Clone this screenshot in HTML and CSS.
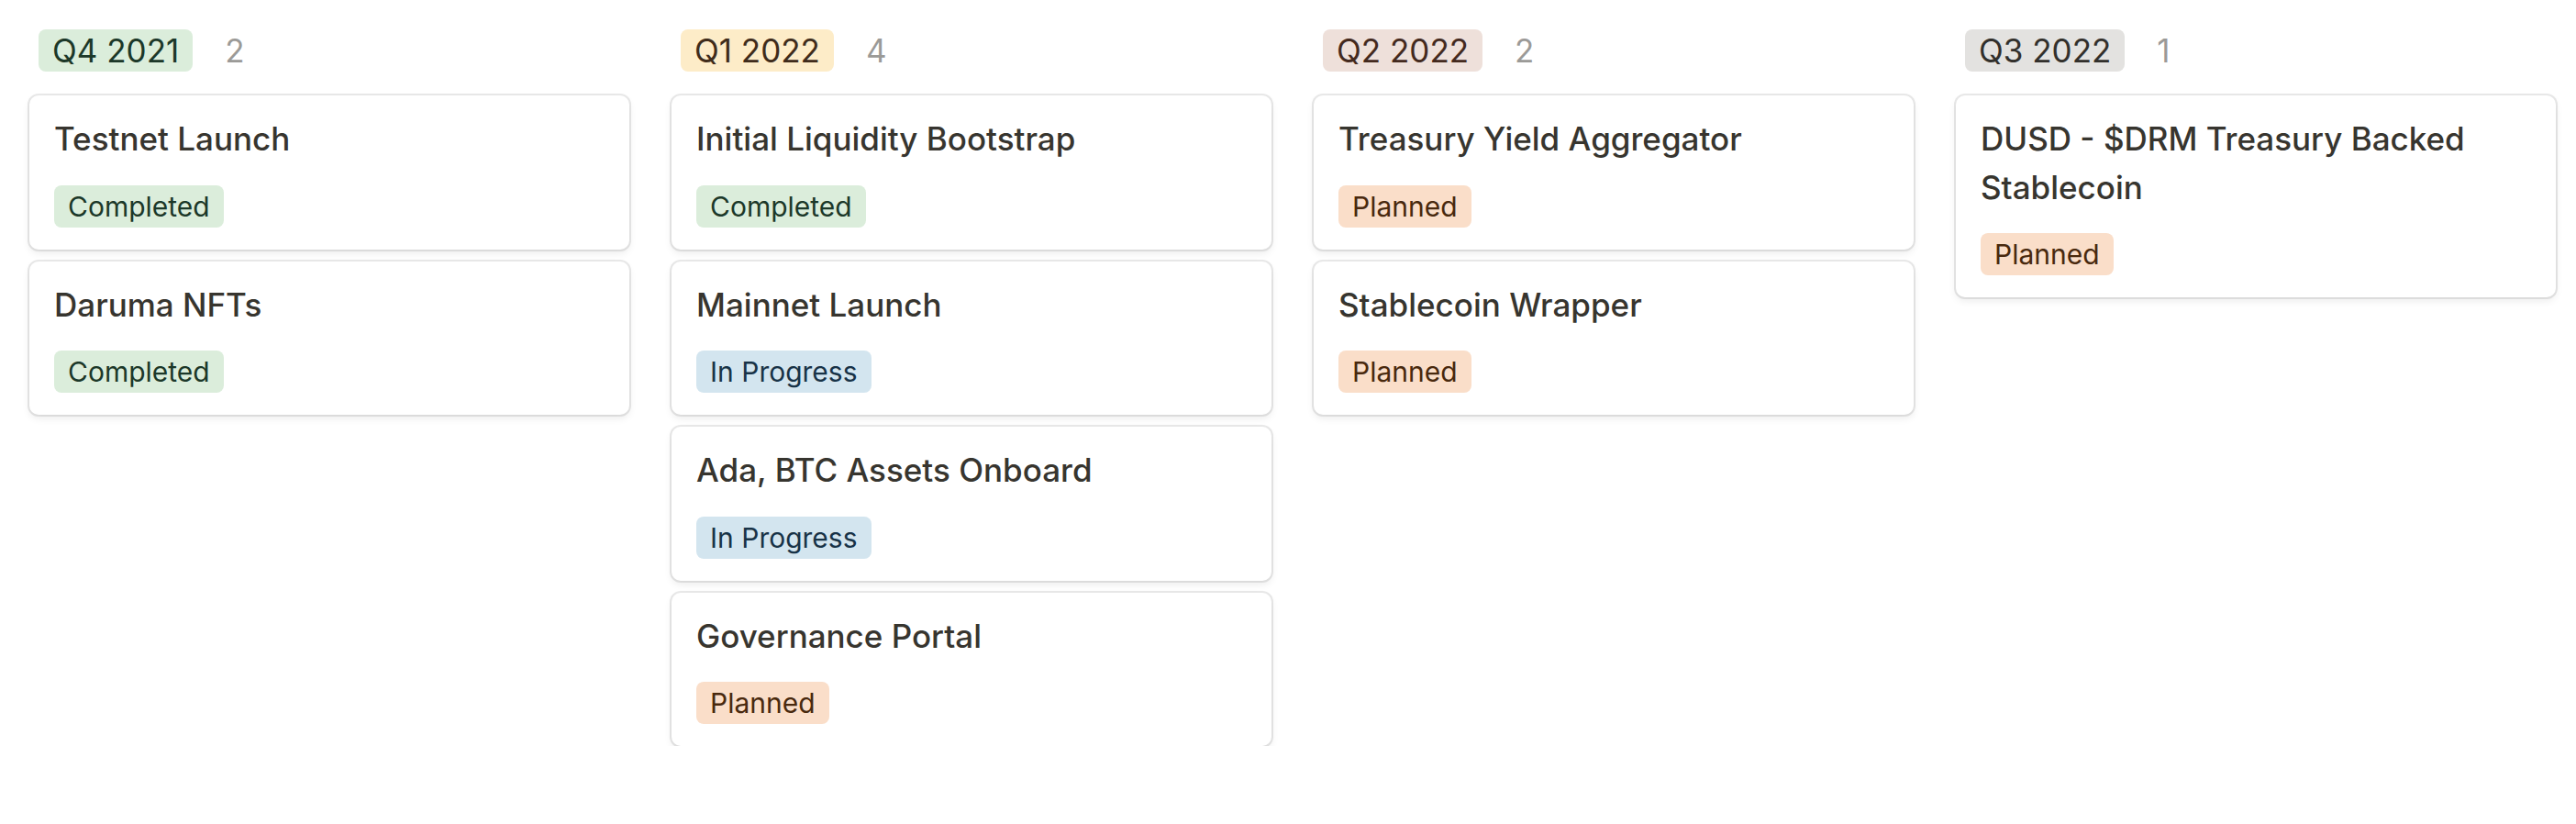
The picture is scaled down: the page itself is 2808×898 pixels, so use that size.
FILE: index.html
```html
<!DOCTYPE html>
<html lang="en">
<head>
<meta charset="utf-8">
<title>Roadmap</title>
<link rel="stylesheet" href="styles.css">
</head>
<body>
<div class="board">
  <section class="column">
    <header class="group-head">
      <span class="group-tag tag-green">Q4 2021</span>
      <span class="count">2</span>
    </header>
    <div class="cards">
      <article class="card">
        <div class="title">Testnet Launch</div>
        <span class="status st-green">Completed</span>
      </article>
      <article class="card">
        <div class="title">Daruma NFTs</div>
        <span class="status st-green">Completed</span>
      </article>
    </div>
  </section>

  <section class="column">
    <header class="group-head">
      <span class="group-tag tag-yellow">Q1 2022</span>
      <span class="count">4</span>
    </header>
    <div class="cards">
      <article class="card">
        <div class="title">Initial Liquidity Bootstrap</div>
        <span class="status st-green">Completed</span>
      </article>
      <article class="card">
        <div class="title">Mainnet Launch</div>
        <span class="status st-blue">In Progress</span>
      </article>
      <article class="card">
        <div class="title">Ada, BTC Assets Onboard</div>
        <span class="status st-blue">In Progress</span>
      </article>
      <article class="card">
        <div class="title">Governance Portal</div>
        <span class="status st-orange">Planned</span>
      </article>
    </div>
  </section>

  <section class="column">
    <header class="group-head">
      <span class="group-tag tag-brown">Q2 2022</span>
      <span class="count">2</span>
    </header>
    <div class="cards">
      <article class="card">
        <div class="title">Treasury Yield Aggregator</div>
        <span class="status st-orange">Planned</span>
      </article>
      <article class="card">
        <div class="title">Stablecoin Wrapper</div>
        <span class="status st-orange">Planned</span>
      </article>
    </div>
  </section>

  <section class="column">
    <header class="group-head">
      <span class="group-tag tag-gray">Q3 2022</span>
      <span class="count">1</span>
    </header>
    <div class="cards">
      <article class="card">
        <div class="title">DUSD - $DRM Treasury Backed Stablecoin</div>
        <span class="status st-orange">Planned</span>
      </article>
    </div>
  </section>
</div>
</body>
</html>
```

FILE: styles.css
```css
html, body {
  margin: 0;
  padding: 0;
  background: #ffffff;
}

body {
  font-family: "Inter", "Roboto", "Liberation Sans", sans-serif;
  color: #37352f;
  -webkit-font-smoothing: antialiased;
}

.board {
  display: flex;
  gap: 46px;
  padding: 32px 0 0 32px;
}

.column {
  width: 654px;
  flex: none;
}

.group-head {
  display: flex;
  align-items: center;
  height: 46px;
  padding-left: 10px;
  margin-bottom: 26px;
}

.group-tag {
  display: inline-flex;
  align-items: center;
  height: 46px;
  padding: 0 15px;
  border-radius: 8px;
  font-size: 35px;
  font-weight: 400;
  white-space: nowrap;
}

.count {
  margin-left: 35px;
  font-size: 35px;
  color: rgba(55, 53, 47, 0.5);
}

.tag-green { background: #dbeddb; color: #1c3829; }
.tag-yellow { background: #fdecc8; color: #402c1b; }
.tag-brown { background: #eee0da; color: #442a1e; }
.tag-gray { background: #e3e2e0; color: #32302c; }

.cards {
  display: flex;
  flex-direction: column;
  gap: 13px;
}

.card {
  background: #ffffff;
  border-radius: 10px;
  box-shadow: 0 0 0 2px rgba(15, 15, 15, 0.09), 0 4px 8px rgba(15, 15, 15, 0.08);
  padding: 21px 27px 24px 27px;
  display: flex;
  flex-direction: column;
  align-items: flex-start;
}

.title {
  font-size: 35px;
  line-height: 52.5px;
  font-weight: 500;
  color: #37352f;
  margin-bottom: 24px;
}

.status {
  display: inline-flex;
  align-items: center;
  height: 46px;
  padding: 0 15px;
  border-radius: 8px;
  font-size: 30px;
  font-weight: 400;
  white-space: nowrap;
}

.st-green { background: #dbeddb; color: #1c3829; }
.st-blue { background: #d3e5ef; color: #183347; }
.st-orange { background: #fadec9; color: #49290e; }
```
